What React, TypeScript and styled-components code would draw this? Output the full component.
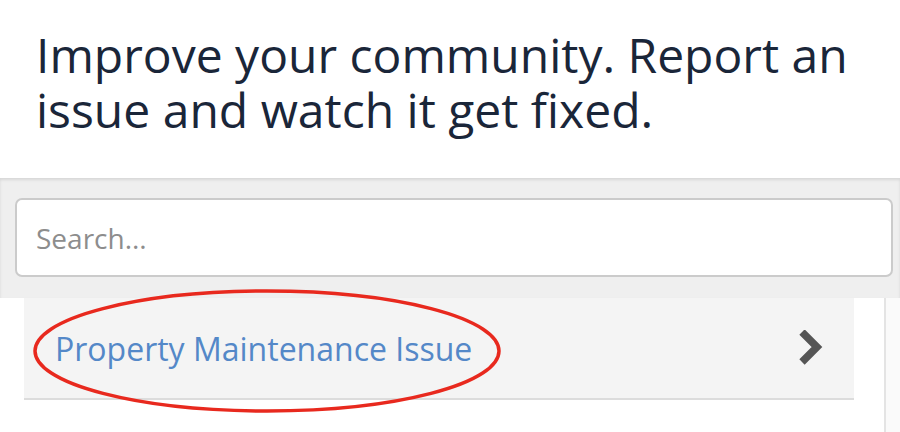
import React from "react";
import styled, { createGlobalStyle } from "styled-components";

const Global = createGlobalStyle`
  html, body { margin: 0; padding: 0; background: #fff; }
  body { font-family: "Open Sans", "Liberation Sans", sans-serif; width: 900px; height: 432px; overflow: hidden; }
  * { box-sizing: border-box; }
`;

const Page = styled.div`
  display: flex;
  flex-direction: column;
  width: 900px;
  height: 432px;
`;

const Header = styled.header`
  height: 178px;
  padding: 27px 0 0 36px;
`;

const Title = styled.h1`
  margin: 0;
  font-size: 48px;
  line-height: 55px;
  font-weight: 400;
  color: #1a2639;
  letter-spacing: 0;
`;

const SearchBand = styled.div`
  background: #efefef;
  box-shadow: inset 0 2px 3px rgba(0, 0, 0, 0.1);
  padding: 20px 7px 21px 15px;
`;

const SearchInput = styled.input`
  display: block;
  width: 100%;
  height: 79px;
  border: 2px solid #cbcbcb;
  border-radius: 7px;
  background: #fff;
  padding: 0 19px;
  font-family: "Open Sans", "Liberation Sans", sans-serif;
  font-size: 28px;
  color: #333;
  outline: none;
  &::placeholder { color: #8d8d8d; }
`;

const ListArea = styled.div`
  flex: 1;
  display: flex;
`;

const List = styled.div`
  flex: 1;
  padding: 0 30px 0 24px;
`;

const Row = styled.a`
  position: relative;
  display: flex;
  align-items: center;
  justify-content: space-between;
  height: 102px;
  padding: 0 30px 0 31px;
  background: #f4f4f4;
  border-bottom: 2px solid #dcdcdc;
  text-decoration: none;
`;

const RowLabel = styled.span`
  font-size: 32px;
  color: #5488c8;
`;

const Chevron = styled.svg`
  width: 26px;
  height: 36px;
  display: block;
`;

const Circle = styled.svg`
  position: absolute;
  left: 9px;
  top: -8px;
  width: 470px;
  height: 126px;
  overflow: visible;
  pointer-events: none;
`;

const ScrollTrack = styled.div`
  width: 16px;
  background: #fafafa;
  border-left: 2px solid #e4e4e4;
`;

export default function App() {
  return (
    <Page>
      <Global />
      <Header>
        <Title>
          Improve your community. Report an
          <br />
          issue and watch it get fixed.
        </Title>
      </Header>
      <SearchBand>
        <SearchInput placeholder="Search..." />
      </SearchBand>
      <ListArea>
        <List>
          <Row href="#">
            <RowLabel>Property Maintenance Issue</RowLabel>
            <Chevron viewBox="0 0 26 36">
              <polyline
                points="4,2 19,17 4,32"
                fill="none"
                stroke="#555"
                strokeWidth="7.5"
                strokeLinejoin="miter"
              />
            </Chevron>
            <Circle viewBox="0 0 470 126">
              <ellipse
                cx="234"
                cy="61"
                rx="232"
                ry="60"
                fill="none"
                stroke="#e8291e"
                strokeWidth="3.5"
              />
            </Circle>
          </Row>
        </List>
        <ScrollTrack />
      </ListArea>
    </Page>
  );
}
